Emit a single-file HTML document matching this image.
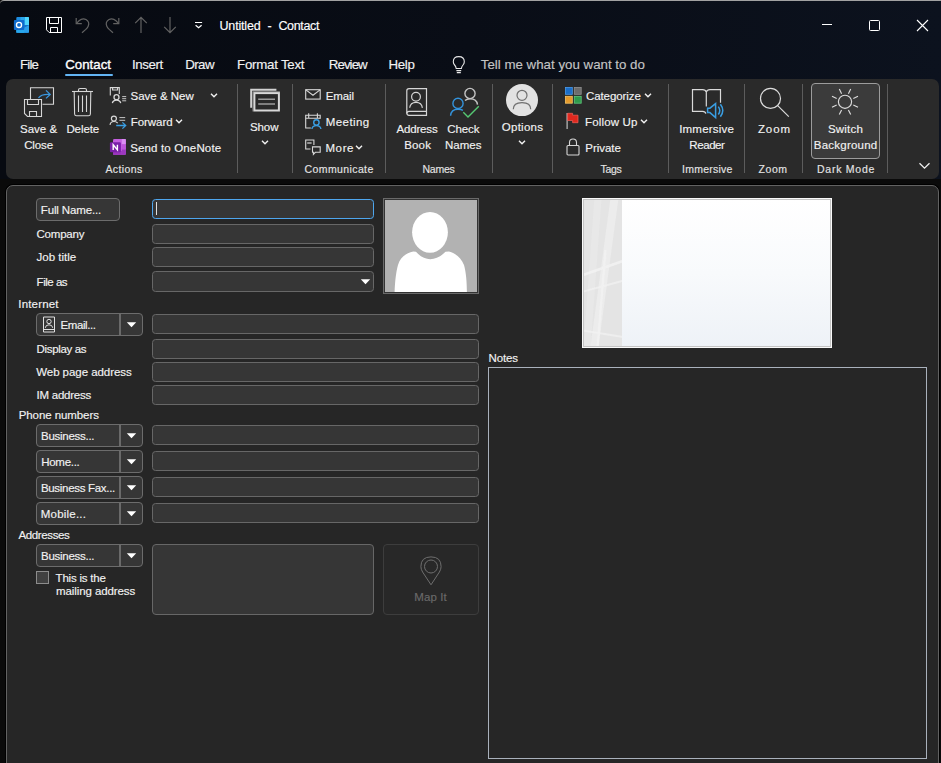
<!DOCTYPE html>
<html>
<head>
<meta charset="utf-8">
<title>Untitled - Contact</title>
<style>
*{box-sizing:border-box;margin:0;padding:0}
html,body{width:941px;height:763px;overflow:hidden;background:#0a0a0a}
body{font-family:"Liberation Sans",sans-serif;font-size:12px;color:#fff;position:relative}
.abs{position:absolute}
.t{position:absolute;white-space:nowrap;line-height:14px;color:#f2f2f2;-webkit-text-stroke:0.15px currentColor}
.tc{text-align:center}
#win{position:absolute;left:0;top:0;width:941px;height:179px;background:linear-gradient(90deg,#070a11 0%,#090d16 50%,#0c121e 100%);border-top:1px solid #a2a2a2;border-top-left-radius:4px;overflow:hidden}
#ribbon{position:absolute;left:6px;top:79px;width:933px;height:100px;background:#2a2a2a;border-radius:7px}
#form{position:absolute;left:6px;top:185px;width:933px;height:590px;background:#262626;border:1px solid #626262;border-radius:7px 7px 0 0;box-shadow:0 0 0 1px #000}
.sep{position:absolute;top:84px;width:1px;height:89px;background:#5c5c5c}
.grp{position:absolute;top:162px;font-size:11px;line-height:14px;color:#e6e6e6;white-space:nowrap;transform:translateX(-50%)}
.inp{position:absolute;height:21px;background:#363636;border:1px solid #676767;border-radius:3.5px}
.btn{position:absolute;height:23px;background:#363636;border:1px solid #6c6c6c;border-radius:4px}
.lbl{position:absolute;white-space:nowrap;font-size:12px;line-height:14px;color:#f0f0f0}
.dd{position:absolute;width:0;height:0;border-left:5px solid transparent;border-right:5px solid transparent;border-top:5px solid #fff}
</style>
</head>
<body>
<div id="win"></div>

<!-- title bar -->


<!-- title bar icons -->
<svg class="abs" style="left:13px;top:16px" width="18" height="18" viewBox="13 16 18 18">
  <rect x="16.300" y="17" width="12.700" height="15.800" rx="1" fill="#1d8ce0"/>
  <path d="M24.900 17 H28 Q29 17 29 18 V25 H24.900 Z" fill="#4fd6fc"/>
  <rect x="20.500" y="17" width="4.400" height="8" fill="#2aa6ec"/>
  <path d="M24.300 27.600 L29 24.900 V31.800 Q29 32.800 28 32.800 H19 Z" fill="#2a9fea"/>
  <path d="M24.300 25 H29 V24.900 L24.300 27.600 Z" fill="#1672c8"/>
  <rect x="16.300" y="30.100" width="8" height="2.700" fill="#29a7ec"/>
  <rect x="13.900" y="19.900" width="10.400" height="10.200" rx="1" fill="#0f6bcd"/>
  <circle cx="19" cy="24.900" r="2.550" fill="none" stroke="#fff" stroke-width="1.350"/>
</svg>
<svg class="abs" style="left:45px;top:16px" width="18" height="18" viewBox="0 0 18 18" fill="none" stroke="#fff" stroke-width="1">
  <path d="M1.500 1.500 H16.500 V16.500 H4.200 L1.500 13.800 Z"/>
  <path d="M4.500 1.500 V7.500 H13.500 V1.500"/>
  <path d="M5.500 16.500 V11.500 H12.500 V16.500"/>
</svg>
<svg class="abs" style="left:75px;top:16px" width="16" height="18" viewBox="0 0 16 18" fill="none" stroke="#626262" stroke-width="1.2">
  <path d="M1.2 2 V7.6 H6.8"/>
  <path d="M1.5 7.4 L4 4.8 Q7.5 1.6 11 3.6 Q15 6 13.2 10.2 Q12.5 11.8 10.8 13.4 L7 16.8"/>
</svg>
<svg class="abs" style="left:104px;top:16px" width="16" height="18" viewBox="0 0 16 18" fill="none" stroke="#626262" stroke-width="1.2">
  <path d="M14.8 2 V7.6 H9.2"/>
  <path d="M14.5 7.4 L12 4.8 Q8.5 1.6 5 3.6 Q1 6 2.8 10.2 Q3.5 11.8 5.2 13.4 L9 16.8"/>
</svg>
<svg class="abs" style="left:133.500px;top:16px" width="14" height="18" viewBox="0 0 14 18" fill="none" stroke="#626262" stroke-width="1.2">
  <path d="M7 17 V1.5 M1.2 7.2 L7 1.4 L12.8 7.2"/>
</svg>
<svg class="abs" style="left:162.500px;top:16px" width="14" height="18" viewBox="0 0 14 18" fill="none" stroke="#626262" stroke-width="1.2">
  <path d="M7 1 V16.5 M1.2 10.8 L7 16.6 L12.8 10.8"/>
</svg>
<svg class="abs" style="left:194px;top:21px" width="10" height="8" viewBox="194 21 10 8" fill="none" stroke="#fff" stroke-width="1.200">
  <path d="M195 22.500 H202.100 M195.600 25.200 L198.600 27.800 L201.600 25.200"/>
</svg>
<!-- window controls -->
<div class="abs" style="left:822px;top:24px;width:10px;height:1px;background:#fff"></div>
<div class="abs" style="left:869px;top:20px;width:11px;height:11px;border:1px solid #fff;border-radius:1.500px"></div>
<svg class="abs" style="left:916px;top:19px" width="13" height="13" viewBox="0 0 13 13" fill="none" stroke="#fff" stroke-width="1.1"><path d="M1 1 L12 12 M12 1 L1 12"/></svg>
<!-- light bulb -->
<svg class="abs" style="left:451px;top:55px" width="16" height="20" viewBox="0 0 16 20" fill="none" stroke="#e8e8e8" stroke-width="1.1">
  <path d="M5.2 13.5 Q5 11.5 3.6 10 Q2.3 8.6 2.3 6.7 Q2.3 1.6 7.8 1.6 Q13.3 1.6 13.3 6.7 Q13.3 8.6 12 10 Q10.6 11.5 10.4 13.5 Z"/>
  <path d="M5.4 15.6 H10.2 M5.8 17.6 H9.8"/>
</svg>

<!-- tabs -->
<div class="abs" style="left:65px;top:74px;width:47.500px;height:2px;background:#62b4f4;border-radius:1px"></div>

<div id="ribbon"></div>

<!-- ribbon contents -->
<div class="sep" style="left:237px"></div>
<div class="sep" style="left:292px"></div>
<div class="sep" style="left:385px"></div>
<div class="sep" style="left:492px"></div>
<div class="sep" style="left:552px"></div>
<div class="sep" style="left:668px"></div>
<div class="sep" style="left:744px"></div>
<div class="sep" style="left:802px"></div>
<div class="sep" style="left:887px"></div>

<!-- Save & Close -->
<svg class="abs" style="left:23px;top:86px" width="33" height="32" viewBox="0 0 33 32" fill="none" stroke="#d6d6d6" stroke-width="1.1">
  <path d="M7.5 13 V1.8 H30.5 V18.2 H19.5"/>
  <path d="M1.5 13.5 H18.5 V30.5 H4.5 L1.5 27.5 Z"/>
  <path d="M4.500 13.500 V18.500 H15.500 V13.500"/>
  <path d="M6.500 30.500 V25.500 H13.500 V30.500"/>
  <path d="M15.5 12 Q18 7.8 27 8.4 M23 4.4 L27.2 8.4 L23 12.4" stroke="#3a96dd" stroke-width="1.3"/>
</svg>
<!-- Delete -->
<svg class="abs" style="left:71px;top:87px" width="23" height="30" viewBox="0 0 23 30" fill="none" stroke="#d6d6d6" stroke-width="1.1">
  <path d="M1 4.5 H22"/>
  <path d="M7.5 4.5 V3 Q7.5 1.5 9 1.5 H14 Q15.500 1.5 15.500 3 V4.5"/>
  <path d="M3.2 4.5 L3.600 27 Q3.700 28.800 5.500 28.800 H17.500 Q19.300 28.800 19.400 27 L19.800 4.500"/>
  <path d="M7.500 8.500 V25 M11.500 8.500 V25 M15.500 8.500 V25"/>
</svg>

<!-- Save & New -->
<svg class="abs" style="left:108px;top:86px" width="20" height="19" viewBox="108 86 20 19" fill="none" stroke="#d8d8d8" stroke-width="1.100">
  <path d="M110.300 95.500 V87.600 H119.300 V94"/>
  <path d="M112.600 87.600 V90 H117.600 V87.600"/>
  <circle cx="116.500" cy="97.200" r="2.500" stroke-width="1.300"/>
  <path d="M112.400 103.200 Q112.800 100.100 116.500 100.100 Q120.200 100.100 120.700 103.200" stroke-width="1.300"/>
  <path d="M122.200 96.600 H126.200 M122.200 98.700 H126.200 M122.200 100.800 H126.200" stroke-width="0.900"/>
</svg>
<svg class="abs" style="left:210px;top:93px" width="8" height="5" viewBox="0 0 8 5" fill="none" stroke="#f2f2f2" stroke-width="1.4"><path d="M1 0.8 L4 3.8 L7 0.8"/></svg>
<!-- Forward -->
<svg class="abs" style="left:108px;top:114px" width="20" height="17" viewBox="108 114 20 17" fill="none" stroke="#d8d8d8" stroke-width="1.100">
  <circle cx="113.900" cy="118.600" r="2.500" stroke-width="1.200"/>
  <path d="M110 124.900 Q110.500 121.500 113.900 121.500 Q116.400 121.500 117.700 123.200" stroke-width="1.200"/>
  <path d="M119.400 117.600 H125.200 M119.400 120.300 H125.200" stroke-width="0.900"/>
  <path d="M116.200 125.500 H125.400 M122.400 122.400 L125.700 125.500 L122.400 128.600" stroke="#3a9ee2" stroke-width="1.300"/>
</svg>
<svg class="abs" style="left:175px;top:119px" width="8" height="5" viewBox="0 0 8 5" fill="none" stroke="#f2f2f2" stroke-width="1.4"><path d="M1 0.8 L4 3.8 L7 0.8"/></svg>
<!-- OneNote -->
<svg class="abs" style="left:109px;top:138px" width="18" height="18" viewBox="109 138 18 18">
  <rect x="113" y="139.100" width="12.800" height="15.700" rx="1.300" fill="#c45ee0"/>
  <rect x="121.800" y="139.100" width="4" height="5.200" fill="#da8ef2"/>
  <rect x="121.800" y="144.300" width="4" height="5.200" fill="#bd55da"/>
  <rect x="121.800" y="149.500" width="4" height="5.300" fill="#9c38c0"/>
  <rect x="113" y="151" width="8.800" height="3.800" fill="#9a35bd"/>
  <rect x="109.900" y="142.300" width="11" height="10" rx="1.200" fill="#7a1fa8"/>
  <path d="M113.200 149.900 V144.800 L117.400 149.900 V144.800" fill="none" stroke="#fff" stroke-width="1.400"/>
</svg>

<!-- Show -->
<svg class="abs" style="left:249px;top:87px" width="32" height="26" viewBox="249 87 32 26" fill="none">
  <path d="M251.200 107.800 V89.700 H276.400" stroke="#d2d2d2" stroke-width="2"/>
  <path d="M252.900 111.500 V91.600 H279.900" stroke="#7a7a7a" stroke-width="1"/>
  <rect x="254.400" y="93.100" width="24.500" height="17.400" stroke="#d8d8d8" stroke-width="2"/>
  <path d="M258.200 99.200 H275 M258.200 104.100 H275" stroke="#9c9c9c" stroke-width="1.500"/>
</svg>
<svg class="abs" style="left:261px;top:140px" width="8" height="5" viewBox="0 0 8 5" fill="none" stroke="#f2f2f2" stroke-width="1.4"><path d="M1 0.8 L4 3.8 L7 0.8"/></svg>
<!-- Communicate -->
<svg class="abs" style="left:304px;top:88px" width="18" height="13" viewBox="304 88 18 13" fill="none" stroke="#d8d8d8" stroke-width="1.100">
  <rect x="305.700" y="89.700" width="14.500" height="9.400"/>
  <path d="M305.900 89.900 L313 95.300 L320 89.900"/>
</svg>
<svg class="abs" style="left:304px;top:112px" width="19" height="19" viewBox="304 112 19 19" fill="none" stroke="#d8d8d8" stroke-width="1.100">
  <path d="M310.800 128 H305.700 V115.200 H320.200 V118.800"/>
  <path d="M305.700 118.300 H320.200 M308.700 113.200 V117.800 M317.400 113.200 V117.800"/>
  <circle cx="316.400" cy="122.400" r="2.700" stroke="#3a9ee2" stroke-width="1.400"/>
  <path d="M311.900 129 Q312.400 125.600 316.400 125.600 Q320.400 125.600 320.900 129" stroke="#3a9ee2" stroke-width="1.400"/>
</svg>
<svg class="abs" style="left:304px;top:138px" width="19" height="18" viewBox="304 138 19 18" fill="none" stroke="#d8d8d8" stroke-width="1.100">
  <path d="M310.500 149 H305.700 V140 H313.900 V145"/>
  <path d="M307.200 143 H311.600" stroke="#a0a0a0" stroke-width="1.800"/>
  <path d="M312.500 146.900 H320.200 V152.300 H315.300 L313.400 154.400 V152.300 H312.500 Z"/>
</svg>
<svg class="abs" style="left:355px;top:145px" width="8" height="5" viewBox="0 0 8 5" fill="none" stroke="#f2f2f2" stroke-width="1.4"><path d="M1 0.8 L4 3.8 L7 0.8"/></svg>

<!-- Names -->
<svg class="abs" style="left:405px;top:87px" width="23" height="30" viewBox="405 87 23 30" fill="none" stroke="#d6d6d6" stroke-width="1.200">
  <path d="M426.500 88.600 H409 Q406.800 88.600 406.800 90.800 V113.100 Q406.800 115.300 409 115.300 H426.500 Z"/>
  <path d="M406.800 113.500 Q406.800 111.300 409 111.300 H426.500"/>
  <circle cx="416" cy="96.800" r="4.400"/>
  <path d="M409.700 107.800 Q410.300 102.300 416 102.300 Q421.700 102.300 422.400 107.800"/>
</svg>
<svg class="abs" style="left:448px;top:86px" width="33" height="33" viewBox="448 86 33 33" fill="none" stroke-width="1.400">
  <circle cx="470" cy="93.500" r="5.100" stroke="#c4c4c4"/>
  <path d="M465 100.500 Q467 98.700 470 98.700 Q476.800 98.700 477.500 104.600" stroke="#c4c4c4"/>
  <circle cx="458" cy="103.400" r="5.100" stroke="#3393dc"/>
  <path d="M450.600 115.800 Q451 109.200 458 109.200 Q461.200 109.200 462.900 110.400" stroke="#3393dc"/>
  <path d="M463.300 112.300 L468 117 L478.800 106.200" stroke="#55c873"/>
</svg>

<!-- Options -->
<svg class="abs" style="left:505px;top:84px" width="34" height="33" viewBox="0 0 34 33">
  <circle cx="17" cy="16.100" r="16" fill="#e2e2e2"/>
  <circle cx="17" cy="11.300" r="5" fill="none" stroke="#707070" stroke-width="1.200"/>
  <path d="M8.300 25.300 Q8.300 18.600 17 18.600 Q25.700 18.600 25.700 25.300" fill="none" stroke="#707070" stroke-width="1.200"/>
</svg>
<svg class="abs" style="left:518px;top:140px" width="8" height="5" viewBox="0 0 8 5" fill="none" stroke="#f2f2f2" stroke-width="1.4"><path d="M1 0.8 L4 3.8 L7 0.8"/></svg>
<!-- Tags -->
<svg class="abs" style="left:565px;top:87px" width="17" height="17" viewBox="0 0 17 17" stroke-width="0.800">
  <rect x="0.400" y="0.400" width="6.900" height="6.900" fill="#1b6ec8" stroke="#4b9bea"/>
  <rect x="9.300" y="0.400" width="6.900" height="6.900" fill="#6c6c6c" stroke="#909090"/>
  <rect x="0.400" y="9.300" width="6.900" height="6.900" fill="#e49a2c" stroke="#f6c465"/>
  <rect x="9.300" y="9.300" width="6.900" height="6.900" fill="#2f9a4c" stroke="#62c87c"/>
</svg>
<svg class="abs" style="left:644px;top:93px" width="8" height="5" viewBox="0 0 8 5" fill="none" stroke="#f2f2f2" stroke-width="1.4"><path d="M1 0.8 L4 3.8 L7 0.8"/></svg>
<svg class="abs" style="left:565px;top:112px" width="16" height="18" viewBox="565 112 16 18">
  <path d="M567.100 113 V129" stroke="#cfcfcf" stroke-width="1.100" fill="none"/>
  <path d="M567.600 113.300 H572.600 V115.200 H578 V122.700 H572.600 V120.500 H567.600 Z" fill="#e0281e" stroke="#f0625a" stroke-width="0.700"/>
</svg>
<svg class="abs" style="left:640px;top:119px" width="8" height="5" viewBox="0 0 8 5" fill="none" stroke="#f2f2f2" stroke-width="1.4"><path d="M1 0.8 L4 3.8 L7 0.8"/></svg>
<svg class="abs" style="left:566px;top:138px" width="14" height="18" viewBox="0 0 14 18" fill="none" stroke="#d6d6d6" stroke-width="1.100">
  <rect x="1" y="7.500" width="12" height="9.500" rx="1"/>
  <path d="M3.500 7.500 V4.500 Q3.500 1 7 1 Q10.500 1 10.500 4.500 V7.500"/>
</svg>

<!-- Immersive -->
<svg class="abs" style="left:690px;top:87px" width="36" height="33" viewBox="690 87 36 33" fill="none">
  <g stroke="#dadada" stroke-width="1.200">
  <path d="M706.300 106.600 V92 Q705.500 89.600 702.600 89.600 H692.500 V111.300 H702.600 Q705.300 111.300 705.800 113.600"/>
  <path d="M706.300 92 Q707.100 89.600 710 89.600 H720.500 V102.700"/>
  </g>
  <g stroke="#3a9ee2" stroke-width="1.500">
  <path d="M707.600 108.200 H709.900 L715.600 103.600 V117.500 L709.900 112.600 H707.600 Z"/>
  <path d="M718.300 106.600 Q721.300 110.500 718.300 114.500 M720.400 104.300 Q725.200 110.500 720.400 116.800"/>
  </g>
</svg>

<!-- Zoom -->
<svg class="abs" style="left:758px;top:87px" width="32" height="32" viewBox="0 0 32 32" fill="none" stroke="#dcdcdc" stroke-width="1.200">
  <circle cx="12.500" cy="11.400" r="10"/>
  <path d="M19.700 18.600 L30.800 29.600"/>
</svg>

<!-- Dark mode -->
<div class="abs" style="left:811px;top:83px;width:69px;height:76px;background:#3b3b3b;border:1px solid #9c9c9c;border-radius:4px"></div>
<svg class="abs" style="left:830px;top:87px" width="30" height="30" viewBox="0 0 30 30" fill="none" stroke="#dcdcdc" stroke-width="1.150">
  <circle cx="15" cy="14.800" r="6.600"/>
  <path d="M9.300 2 L11.600 6.700 M20.700 2 L18.400 6.700 M9.300 27.600 L11.600 22.900 M20.700 27.600 L18.400 22.900 M2 9.300 L6.700 11.600 M2 20.300 L6.700 18 M28 9.300 L23.300 11.600 M28 20.300 L23.300 18"/>
</svg>
<svg class="abs" style="left:918px;top:162px" width="13" height="8" viewBox="0 0 13 8" fill="none" stroke="#f0f0f0" stroke-width="1.300"><path d="M1.500 1.200 L6.500 6.200 L11.500 1.200"/></svg>

<div id="form"></div>
<div class="btn" style="left:36px;top:198px;width:84px;height:23px"></div>
<div class="inp" style="left:152px;top:199px;width:222px;height:20px;border-color:#4ea6ee"></div>
<div class="abs" style="left:156px;top:202px;width:1px;height:13px;background:#e0e0e0"></div>
<div class="inp" style="left:152px;top:224px;width:222px;height:20px;"></div>
<div class="inp" style="left:152px;top:247px;width:222px;height:20px;"></div>
<div class="inp" style="left:152px;top:271px;width:222px;height:21px;"></div>
<svg class="abs" style="left:360px;top:279px" width="11" height="6" viewBox="0 0 11 6"><path d="M0.8 0.2 H10.2 L5.5 5.3 Z" fill="#fff"/></svg>
<div class="abs" style="left:383px;top:198px;width:96px;height:96px;border:1px solid #6a6a6a;background:#333"></div>
<svg class="abs" style="left:385px;top:200px" width="92" height="92" viewBox="385 200 92 92">
  <rect x="385" y="200" width="92" height="92" fill="#b2b2b2"/>
  <ellipse cx="430" cy="232.3" rx="17.9" ry="20.4" fill="#fff"/>
  <path d="M394.6 292 C395 282 396 272 398 265.100 C400 258 405 253.500 413.300 251.500 L416 251.700 C420 256.500 425 259.200 430.300 259.200 C435.600 259.200 441 256.500 445.500 251.700 L449 251.500 C456 253.500 461 258 464 265.100 C466 272 466.900 282 466.900 292 Z" fill="#fff"/>
</svg>
<div class="btn" style="left:36px;top:313px;width:107px;height:23px"></div>
<div class="abs" style="left:119px;top:314px;width:2px;height:21px;background:#6a6a6a"></div>
<svg class="abs" style="left:126px;top:322px" width="11" height="6" viewBox="0 0 11 6"><path d="M0.8 0.2 H10.2 L5.5 5.3 Z" fill="#fff"/></svg>
<svg class="abs" style="left:42px;top:316px" width="14" height="17" viewBox="0 0 14 17" fill="none" stroke="#e0e0e0" stroke-width="1">
  <path d="M1.500 16 V1 H12.500 V16 Z M1.500 13.500 H12.500"/>
  <circle cx="7" cy="5.500" r="2.200"/>
  <path d="M3.300 11.800 Q3.600 8.800 7 8.800 Q10.400 8.800 10.700 11.800"/>
</svg>
<div class="inp" style="left:152px;top:314px;width:327px;height:20px;"></div>
<div class="inp" style="left:152px;top:339px;width:327px;height:20px;"></div>
<div class="inp" style="left:152px;top:362px;width:327px;height:20px;"></div>
<div class="inp" style="left:152px;top:385px;width:327px;height:20px;"></div>
<div class="btn" style="left:36px;top:424px;width:107px;height:23px"></div>
<div class="abs" style="left:119px;top:425px;width:2px;height:21px;background:#6a6a6a"></div>
<svg class="abs" style="left:126px;top:433px" width="11" height="6" viewBox="0 0 11 6"><path d="M0.8 0.2 H10.2 L5.5 5.3 Z" fill="#fff"/></svg>
<div class="inp" style="left:152px;top:425px;width:327px;height:20px;"></div>
<div class="btn" style="left:36px;top:450px;width:107px;height:23px"></div>
<div class="abs" style="left:119px;top:451px;width:2px;height:21px;background:#6a6a6a"></div>
<svg class="abs" style="left:126px;top:459px" width="11" height="6" viewBox="0 0 11 6"><path d="M0.8 0.2 H10.2 L5.5 5.3 Z" fill="#fff"/></svg>
<div class="inp" style="left:152px;top:451px;width:327px;height:20px;"></div>
<div class="btn" style="left:36px;top:476px;width:107px;height:23px"></div>
<div class="abs" style="left:119px;top:477px;width:2px;height:21px;background:#6a6a6a"></div>
<svg class="abs" style="left:126px;top:485px" width="11" height="6" viewBox="0 0 11 6"><path d="M0.8 0.2 H10.2 L5.5 5.3 Z" fill="#fff"/></svg>
<div class="inp" style="left:152px;top:477px;width:327px;height:20px;"></div>
<div class="btn" style="left:36px;top:502px;width:107px;height:23px"></div>
<div class="abs" style="left:119px;top:503px;width:2px;height:21px;background:#6a6a6a"></div>
<svg class="abs" style="left:126px;top:511px" width="11" height="6" viewBox="0 0 11 6"><path d="M0.8 0.2 H10.2 L5.5 5.3 Z" fill="#fff"/></svg>
<div class="inp" style="left:152px;top:503px;width:327px;height:20px;"></div>
<div class="btn" style="left:36px;top:544px;width:107px;height:23px"></div>
<div class="abs" style="left:119px;top:545px;width:2px;height:21px;background:#6a6a6a"></div>
<svg class="abs" style="left:126px;top:553px" width="11" height="6" viewBox="0 0 11 6"><path d="M0.8 0.2 H10.2 L5.5 5.3 Z" fill="#fff"/></svg>
<div class="abs" style="left:36px;top:571px;width:13px;height:13px;background:#404040;border:1px solid #8c8c8c"></div>
<div class="inp" style="left:152px;top:544px;width:222px;height:71px;border-radius:4px"></div>
<div class="abs" style="left:383px;top:544px;width:96px;height:71px;border:1px solid #3d3d3d;border-radius:4px;background:#282828"></div>
<svg class="abs" style="left:419px;top:555px" width="24" height="32" viewBox="0 0 24 32" fill="none" stroke="#6e6e6e" stroke-width="1">
  <circle cx="12" cy="11.500" r="6.500"/>
  <path d="M12 29.800 L3.600 17 Q1.900 14.300 1.900 11.500 Q1.900 1.900 12 1.900 Q22.100 1.900 22.100 11.500 Q22.100 14.300 20.400 17 Z"/>
</svg>
<div class="abs" style="left:582px;top:198px;width:250px;height:150px;background:#fff;border:1px solid #fafafa;box-shadow:inset 0 0 0 1px #c4c4c4"></div>
<svg class="abs" style="left:584px;top:200px" width="246" height="146" viewBox="0 0 246 146">
  <defs><linearGradient id="cg" x1="0" y1="0" x2="0" y2="1"><stop offset="0" stop-color="#ffffff"/><stop offset="0.5" stop-color="#f8fafc"/><stop offset="1" stop-color="#eef2f7"/></linearGradient>
  <clipPath id="cs"><rect x="0" y="0" width="38" height="146"/></clipPath>
  <filter id="bl" x="-20%" y="-20%" width="140%" height="140%"><feGaussianBlur stdDeviation="0.700"/></filter></defs>
  <rect x="0" y="0" width="246" height="146" fill="url(#cg)"/>
  <rect x="0" y="0" width="38" height="146" fill="#e4e4e4"/>
  <g clip-path="url(#cs)"><g stroke="#f2f2f2" fill="none" filter="url(#bl)">
    <path d="M30.500 -2 L10.300 148" stroke-width="8" opacity="0.550"/>
    <path d="M14 -2 L3 148" stroke-width="7" opacity="0.350"/>
    <path d="M21.500 50 L13.500 148" stroke-width="2.500" opacity="0.700"/>
    <path d="M-1 75 L39 61" stroke-width="2.600" opacity="0.850"/>
    <path d="M-1 91.600 L39 80.700" stroke-width="2" opacity="0.750"/>
    <path d="M-1 130.500 L39 137" stroke-width="1.800" opacity="0.700"/>
  </g></g>
</svg>
<div class="abs" style="left:488px;top:367px;width:439px;height:392px;border:1px solid #a9b1bc;background:#262626"></div>
<div class="t" style="left:219.5px;top:19px;font-size:12.5px;color:#fff;letter-spacing:-0.17px;">Untitled</div>
<div class="t" style="left:267.6px;top:19px;font-size:12.5px;color:#fff;letter-spacing:0px;">-</div>
<div class="t" style="left:278.4px;top:19px;font-size:12.5px;color:#fff;letter-spacing:-0.33px;">Contact</div>
<div class="t" style="left:20.1px;top:58px;font-size:13.3px;color:#f2f2f2;letter-spacing:-0.87px;">File</div>
<div class="t" style="left:65.2px;top:58px;font-size:13.3px;color:#fff;letter-spacing:0.0px;-webkit-text-stroke:0.35px #fff;">Contact</div>
<div class="t" style="left:132.0px;top:58px;font-size:13.3px;color:#f2f2f2;letter-spacing:-0.4px;">Insert</div>
<div class="t" style="left:185.2px;top:58px;font-size:13.3px;color:#f2f2f2;letter-spacing:-0.57px;">Draw</div>
<div class="t" style="left:237.0px;top:58px;font-size:13.3px;color:#f2f2f2;letter-spacing:-0.24px;">Format Text</div>
<div class="t" style="left:328.8px;top:58px;font-size:13.3px;color:#f2f2f2;letter-spacing:-0.94px;">Review</div>
<div class="t" style="left:388.5px;top:58px;font-size:13.3px;color:#f2f2f2;letter-spacing:-0.33px;">Help</div>
<div class="t" style="left:480.8px;top:58px;font-size:13.3px;color:#c4c4c4;letter-spacing:-0.0px;">Tell me what you want to do</div>
<div class="t" style="left:20.0px;top:122px;font-size:11.5px;color:#f2f2f2;letter-spacing:0.0px;">Save &amp;</div>
<div class="t" style="left:24.2px;top:138px;font-size:11.5px;color:#f2f2f2;letter-spacing:-0.12px;">Close</div>
<div class="t" style="left:66.4px;top:122px;font-size:11.5px;color:#f2f2f2;letter-spacing:-0.08px;">Delete</div>
<div class="t" style="left:130.6px;top:89px;font-size:11.5px;color:#f2f2f2;letter-spacing:-0.02px;">Save &amp; New</div>
<div class="t" style="left:130.7px;top:115px;font-size:11.5px;color:#f2f2f2;letter-spacing:-0.03px;">Forward</div>
<div class="t" style="left:130.2px;top:141px;font-size:11.5px;color:#f2f2f2;letter-spacing:0.15px;">Send to OneNote</div>
<div class="t" style="left:249.9px;top:120px;font-size:11.5px;color:#f2f2f2;letter-spacing:-0.07px;">Show</div>
<div class="t" style="left:325.8px;top:89px;font-size:11.5px;color:#f2f2f2;letter-spacing:-0.12px;">Email</div>
<div class="t" style="left:325.8px;top:115px;font-size:11.5px;color:#f2f2f2;letter-spacing:0.42px;">Meeting</div>
<div class="t" style="left:325.4px;top:141px;font-size:11.5px;color:#f2f2f2;letter-spacing:0.63px;">More</div>
<div class="t" style="left:396.4px;top:122px;font-size:11.5px;color:#f2f2f2;letter-spacing:-0.15px;">Address</div>
<div class="t" style="left:404.2px;top:138px;font-size:11.5px;color:#f2f2f2;letter-spacing:0.17px;">Book</div>
<div class="t" style="left:447.3px;top:122px;font-size:11.5px;color:#f2f2f2;letter-spacing:-0.1px;">Check</div>
<div class="t" style="left:445.0px;top:138px;font-size:11.5px;color:#f2f2f2;letter-spacing:0.0px;">Names</div>
<div class="t" style="left:501.8px;top:120px;font-size:11.5px;color:#f2f2f2;letter-spacing:0.25px;">Options</div>
<div class="t" style="left:585.9px;top:89px;font-size:11.5px;color:#f2f2f2;letter-spacing:-0.07px;">Categorize</div>
<div class="t" style="left:585.0px;top:115px;font-size:11.5px;color:#f2f2f2;letter-spacing:0.16px;">Follow Up</div>
<div class="t" style="left:585.3px;top:141px;font-size:11.5px;color:#f2f2f2;letter-spacing:-0.03px;">Private</div>
<div class="t" style="left:679.2px;top:122px;font-size:11.5px;color:#f2f2f2;letter-spacing:0.2px;">Immersive</div>
<div class="t" style="left:689.3px;top:138px;font-size:11.5px;color:#f2f2f2;letter-spacing:-0.42px;">Reader</div>
<div class="t" style="left:757.9px;top:122px;font-size:11.5px;color:#f2f2f2;letter-spacing:0.93px;">Zoom</div>
<div class="t" style="left:828.0px;top:122px;font-size:11.5px;color:#f2f2f2;letter-spacing:0.18px;">Switch</div>
<div class="t" style="left:813.8px;top:138px;font-size:11.5px;color:#f2f2f2;letter-spacing:0.23px;">Background</div>
<div class="t" style="left:105.4px;top:162px;font-size:10.5px;color:#e4e4e4;letter-spacing:0.42px;">Actions</div>
<div class="t" style="left:304.6px;top:162px;font-size:10.5px;color:#e4e4e4;letter-spacing:0.39px;">Communicate</div>
<div class="t" style="left:422.4px;top:162px;font-size:10.5px;color:#e4e4e4;letter-spacing:-0.2px;">Names</div>
<div class="t" style="left:600.5px;top:162px;font-size:10.5px;color:#e4e4e4;letter-spacing:-0.27px;">Tags</div>
<div class="t" style="left:682.0px;top:162px;font-size:10.5px;color:#e4e4e4;letter-spacing:0.25px;">Immersive</div>
<div class="t" style="left:758.6px;top:162px;font-size:10.5px;color:#e4e4e4;letter-spacing:0.53px;">Zoom</div>
<div class="t" style="left:817.0px;top:162px;font-size:10.5px;color:#e4e4e4;letter-spacing:0.75px;">Dark Mode</div>
<div class="t" style="left:40.8px;top:203px;font-size:11.5px;color:#f2f2f2;letter-spacing:-0.14px;">Full Name...</div>
<div class="t" style="left:36.4px;top:227px;font-size:11.5px;color:#f2f2f2;letter-spacing:-0.18px;">Company</div>
<div class="t" style="left:36.5px;top:250px;font-size:11.5px;color:#f2f2f2;letter-spacing:0.0px;">Job title</div>
<div class="t" style="left:36.6px;top:275px;font-size:11.5px;color:#f2f2f2;letter-spacing:-0.48px;">File as</div>
<div class="t" style="left:18.3px;top:297px;font-size:11.5px;color:#f2f2f2;letter-spacing:0.17px;">Internet</div>
<div class="t" style="left:60.6px;top:318px;font-size:11.5px;color:#f2f2f2;letter-spacing:-0.43px;">Email...</div>
<div class="t" style="left:36.6px;top:342px;font-size:11.5px;color:#f2f2f2;letter-spacing:-0.34px;">Display as</div>
<div class="t" style="left:36.2px;top:365px;font-size:11.5px;color:#f2f2f2;letter-spacing:-0.05px;">Web page address</div>
<div class="t" style="left:36.5px;top:388px;font-size:11.5px;color:#f2f2f2;letter-spacing:-0.24px;">IM address</div>
<div class="t" style="left:18.7px;top:408px;font-size:11.5px;color:#f2f2f2;letter-spacing:-0.08px;">Phone numbers</div>
<div class="t" style="left:41.1px;top:429px;font-size:11.5px;color:#f2f2f2;letter-spacing:-0.28px;">Business...</div>
<div class="t" style="left:41.2px;top:455px;font-size:11.5px;color:#f2f2f2;letter-spacing:-0.28px;">Home...</div>
<div class="t" style="left:40.9px;top:481px;font-size:11.5px;color:#f2f2f2;letter-spacing:-0.3px;">Business Fax...</div>
<div class="t" style="left:40.8px;top:507px;font-size:11.5px;color:#f2f2f2;letter-spacing:0.21px;">Mobile...</div>
<div class="t" style="left:18.6px;top:528px;font-size:11.5px;color:#f2f2f2;letter-spacing:-0.4px;">Addresses</div>
<div class="t" style="left:41.1px;top:549px;font-size:11.5px;color:#f2f2f2;letter-spacing:-0.28px;">Business...</div>
<div class="t" style="left:55.6px;top:571px;font-size:11.5px;color:#f2f2f2;letter-spacing:-0.21px;">This is the</div>
<div class="t" style="left:56.0px;top:584px;font-size:11.5px;color:#f2f2f2;letter-spacing:-0.09px;">mailing address</div>
<div class="t" style="left:414.3px;top:590px;font-size:11.5px;color:#6a6a6a;letter-spacing:0.08px;">Map It</div>
<div class="t" style="left:488.6px;top:351px;font-size:11.5px;color:#f2f2f2;letter-spacing:-0.18px;">Notes</div>
</body>
</html>
